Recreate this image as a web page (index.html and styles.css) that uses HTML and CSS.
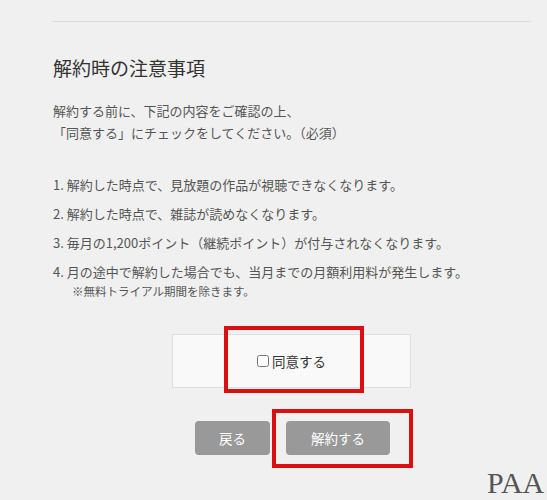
FILE: index.html
```html
<!DOCTYPE html>
<html lang="ja">
<head>
  <meta charset="UTF-8" />
  <meta name="viewport" content="width=device-width, initial-scale=1" />
  <title>解約時の注意事項</title>
  <link rel="stylesheet" href="styles.css">
</head>
<body>

  <div class="page">
    <div class="divider"></div>

    <h1 class="page-title">解約時の注意事項</h1>

    <p class="intro">
      解約する前に、下記の内容をご確認の上、<br>
      「同意する」にチェックをしてください。（必須）
    </p>

    <ol class="notes">
      <li>1. 解約した時点で、見放題の作品が視聴できなくなります。</li>
      <li>2. 解約した時点で、雑誌が読めなくなります。</li>
      <li>3. 毎月の1,200ポイント（継続ポイント）が付与されなくなります。</li>
      <li>4. 月の途中で解約した場合でも、当月までの月額利用料が発生します。
        <span class="sub-note">※無料トライアル期間を除きます。</span>
      </li>
    </ol>

    <div class="agree-box">
      <label class="agree-label"><input type="checkbox" class="agree-check"> 同意する</label>
      <div class="mark mark-agree"></div>
    </div>

    <div class="button-row">
      <button class="btn btn-back">戻る</button>
      <div class="btn-wrap">
        <button class="btn btn-cancel">解約する</button>
        <div class="mark mark-cancel"></div>
      </div>
    </div>
  </div>

  <div class="watermark">PAA</div>

</body>
</html>
```

FILE: styles.css
```css
body {
  margin: 0;
  background: #f0f0f0;
  color: #555;
  font-family: "Noto Sans CJK JP", "Noto Sans", sans-serif;
}

.page {
  width: 479px;
  margin-left: 52px;
  padding-top: 21px;
  padding-bottom: 40px;
}

.divider {
  border-top: 1px solid #dcdcdc;
}

.page-title {
  font-size: 19px;
  font-weight: normal;
  color: #333;
  line-height: 28px;
  margin: 32px 0 0 1px;
}

.intro {
  font-size: 13px;
  line-height: 22px;
  margin: 18px 0 0 1px;
}

.notes {
  list-style: none;
  padding: 0;
  margin: 30px 0 0 1px;
  font-size: 13px;
  line-height: 22px;
}

.notes li {
  margin-bottom: 7px;
}

.sub-note {
  display: block;
  font-size: 11.5px;
  line-height: 16px;
  padding-left: 19px;
}

.agree-box {
  position: relative;
  width: 237px;
  height: 52px;
  margin: 35px auto 0;
  background: #f9f9f9;
  border: 1px solid #dedede;
  display: flex;
  align-items: center;
  justify-content: center;
}

.agree-label {
  font-size: 13.5px;
  color: #333;
  display: flex;
  align-items: center;
  gap: 3px;
}

.agree-check {
  margin: 0;
  width: 12px;
  height: 12px;
}

.button-row {
  display: flex;
  justify-content: center;
  gap: 16px;
  margin-top: 33px;
  padding-left: 2px;
}

.btn-wrap {
  position: relative;
}

.btn {
  height: 34px;
  border: none;
  border-radius: 4px;
  background: #999;
  color: #fff;
  font-family: inherit;
  font-size: 13.5px;
}

.btn-back {
  width: 75px;
}

.btn-cancel {
  width: 104px;
}

/* annotation boxes */
.mark {
  position: absolute;
  border: 4px solid #d90f12;
  box-sizing: border-box;
  pointer-events: none;
}

.mark-agree {
  left: 51px;
  top: -9px;
  width: 140px;
  height: 67px;
}

.mark-cancel {
  left: -14px;
  top: -12px;
  width: 141px;
  height: 59px;
}

.watermark {
  position: absolute;
  left: 487px;
  top: 467px;
  font-family: "Liberation Serif", serif;
  font-size: 30px;
  line-height: 32px;
  color: #555;
}
```
